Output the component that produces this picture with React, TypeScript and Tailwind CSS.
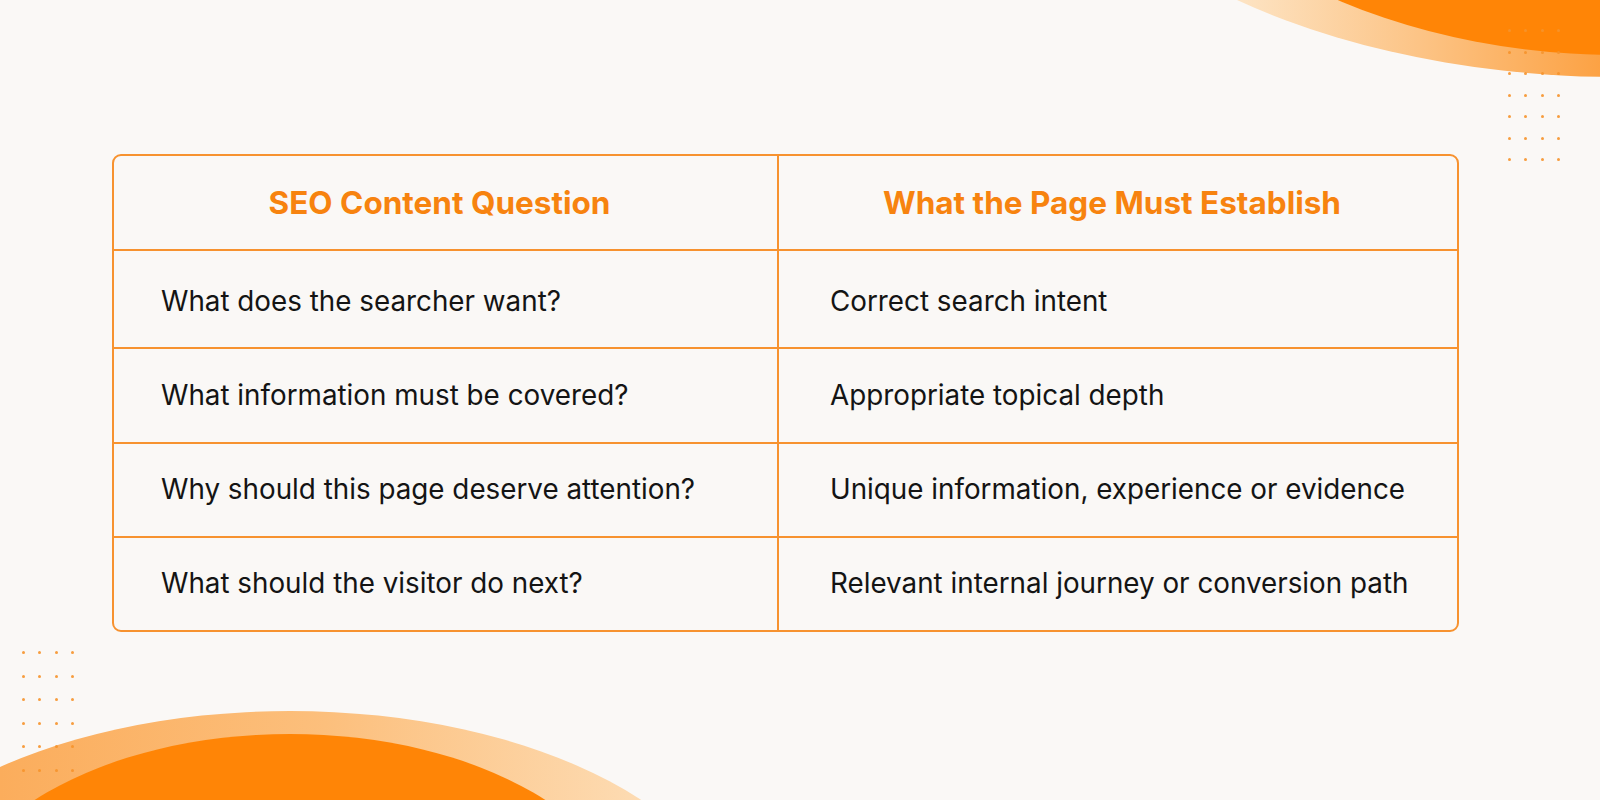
const rows = [
  ['What does the searcher want?', 'Correct search intent', 'h-[96px] pt-[5px]'],
  ['What information must be covered?', 'Appropriate topical depth', 'h-[93px]'],
  ['Why should this page deserve attention?', 'Unique information, experience or evidence', 'h-[92px]'],
  ['What should the visitor do next?', 'Relevant internal journey or conversion path', 'h-[92px]'],
];

function Dots({ cols, rows, className }: { cols: number; rows: number; className: string }) {
  return (
    <div className={`absolute grid ${className}`}>
      {Array.from({ length: cols * rows }).map((_, i) => (
        <span key={i} className="h-[3px] w-[3px] rounded-full bg-[#f7942c]" />
      ))}
    </div>
  );
}

export default function App() {
  return (
    <div
      className="relative h-[800px] w-[1600px] overflow-hidden bg-[#faf8f6]"
      style={{ fontFamily: 'Inter, "Noto Sans", sans-serif' }}
    >
      {/* decorative arcs */}
      <svg className="absolute right-0 top-0" width="400" height="110" viewBox="1200 0 400 110">
        <defs>
          <linearGradient id="tr" x1="1237" y1="0" x2="1600" y2="0" gradientUnits="userSpaceOnUse">
            <stop offset="0" stopColor="#fde4c4" />
            <stop offset="0.5" stopColor="#fcc486" />
            <stop offset="1" stopColor="#fca244" />
          </linearGradient>
        </defs>
        <ellipse cx="1620" cy="-260" rx="602" ry="337" fill="url(#tr)" />
        <ellipse cx="1620" cy="-260" rx="500" ry="315" fill="#ff8506" />
      </svg>
      <svg className="absolute bottom-0 left-0" width="700" height="110" viewBox="0 690 700 110">
        <defs>
          <linearGradient id="bl" x1="0" y1="0" x2="650" y2="0" gradientUnits="userSpaceOnUse">
            <stop offset="0" stopColor="#fbad5c" />
            <stop offset="0.5" stopColor="#fcbf7c" />
            <stop offset="1" stopColor="#fddcb4" />
          </linearGradient>
        </defs>
        <ellipse cx="290" cy="951" rx="452" ry="240" fill="url(#bl)" />
        <ellipse cx="290" cy="934" rx="344" ry="200" fill="#ff8506" />
      </svg>

      <Dots cols={4} rows={7} className="left-[1508px] top-[29px] grid-cols-4 gap-x-[13.3px] gap-y-[18.5px] opacity-90" />
      <Dots cols={4} rows={6} className="left-[22px] top-[651px] grid-cols-4 gap-x-[13.3px] gap-y-[20.5px] opacity-90" />

      <div className="relative pl-[112px] pt-[154px]">
        <div className="w-[1347px] overflow-hidden rounded-[9px] border-2 border-[#f7922f]">
          <div className="grid h-[93px] grid-cols-[665px_1fr]">
            <div className="flex items-center justify-center border-r-2 border-[#f7922f] pr-[12px] text-[31.5px] font-bold text-[#f7830f]">
              SEO Content Question
            </div>
            <div className="flex items-center justify-center pr-[12px] text-[31.5px] font-bold text-[#f7830f]">
              What the Page Must Establish
            </div>
          </div>
          {rows.map(([q, a, size]) => (
            <div key={q} className="grid grid-cols-[665px_1fr] border-t-2 border-[#f7922f]">
              <div className={`flex items-center border-r-2 border-[#f7922f] pl-[47px] text-[27.8px] text-[#141414] ${size}`}>{q}</div>
              <div className={`flex items-center pl-[51px] text-[27.8px] text-[#141414] ${size}`}>{a}</div>
            </div>
          ))}
        </div>
      </div>
    </div>
  );
}
